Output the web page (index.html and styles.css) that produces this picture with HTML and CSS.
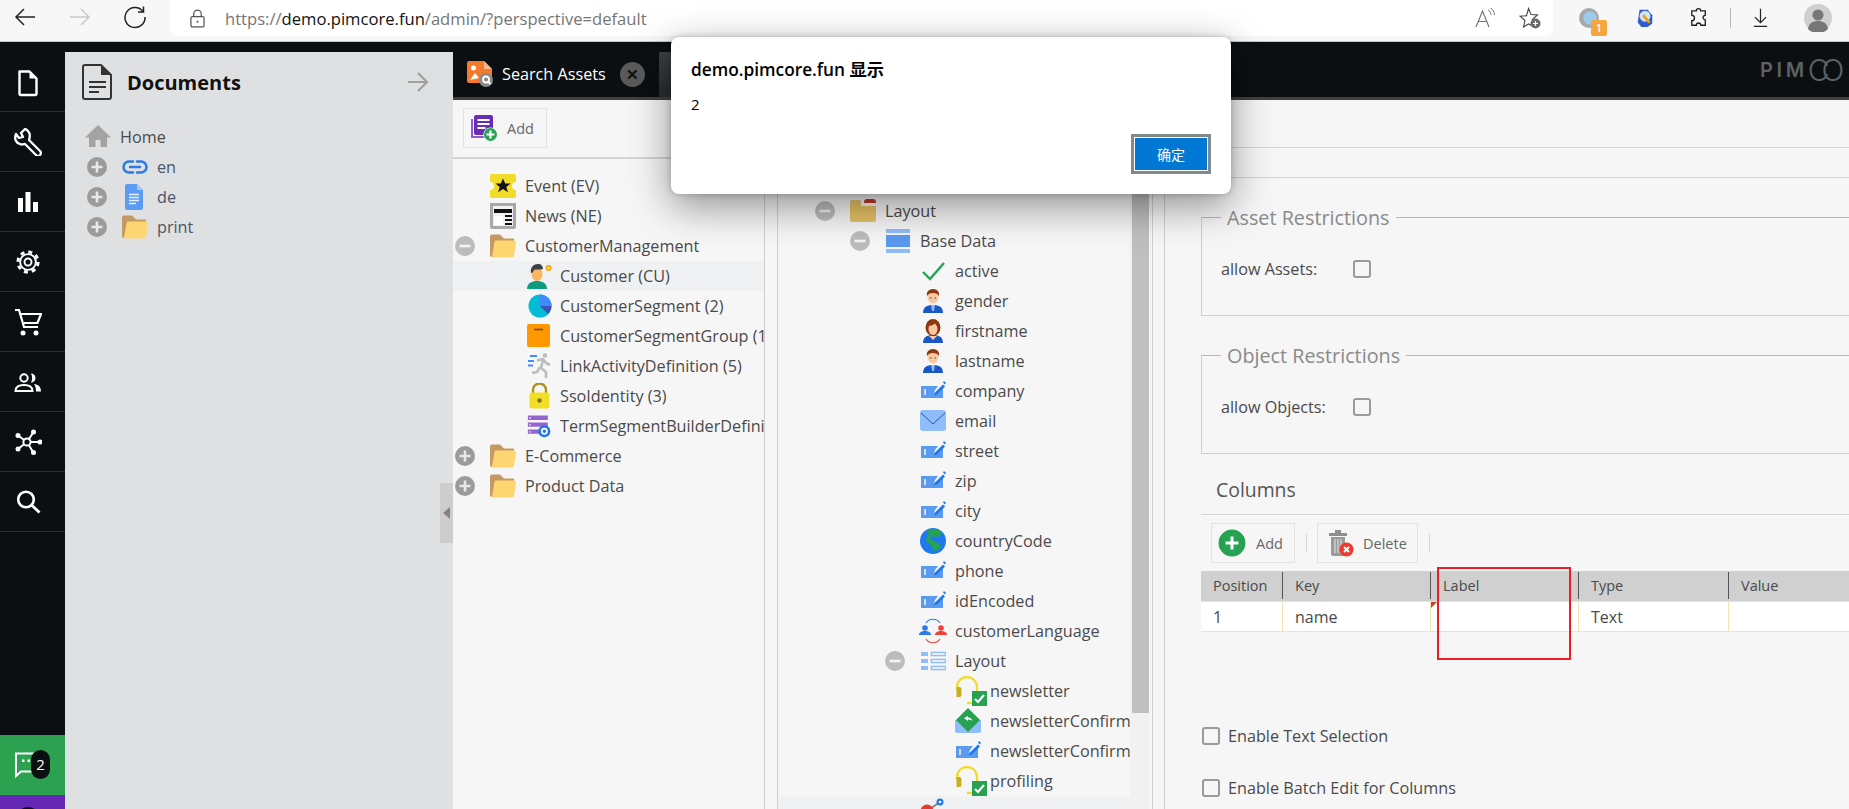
FILE: index.html
```html
<!DOCTYPE html>
<html lang="en">
<head>
<meta charset="utf-8">
<title>Pimcore</title>
<link rel="stylesheet" href="styles.css">
</head>
<body>
<svg class="sprite" xmlns="http://www.w3.org/2000/svg">
  <symbol id="plus" viewBox="0 0 20 20"><circle cx="10" cy="10" r="10" fill="#9b9b9b"/><path d="M10 4.5v11M4.5 10h11" stroke="#e8e8e8" stroke-width="2.6"/></symbol>
  <symbol id="minus" viewBox="0 0 20 20"><circle cx="10" cy="10" r="10" fill="#bcbcbc"/><path d="M4.5 10h11" stroke="#f4f4f4" stroke-width="2.6"/></symbol>
  <symbol id="folder" viewBox="0 0 26 26"><path d="M0 3.5a2 2 0 0 1 2-2h8l4 4h10v3H5L3 24H2a2 2 0 0 1-2-2z" fill="#c39a62"/><path d="M5 7.500h19a2 2 0 0 1 2 2l-2 13a2 2 0 0 1-2 2H3a1.500 1.500 0 0 1-1-1.500z" fill="#fdd672"/></symbol>
  <symbol id="home" viewBox="0 0 26 26"><path d="M13 1 0 13.500h4V23h6.500v-7h5v7H22v-9.500h4z" fill="#a3a3a3"/></symbol>
  <symbol id="link" viewBox="0 0 26 26"><path d="M11 7.500H7a5.500 5.500 0 0 0 0 11h4M15 7.500h4a5.500 5.500 0 0 1 0 11h-4M8 13h10" fill="none" stroke="#2a79e4" stroke-width="2.500" stroke-linecap="round"/></symbol>
  <symbol id="gdoc" viewBox="0 0 26 26"><path d="M5 0h10l6 6v18a2 2 0 0 1-2 2H5a2 2 0 0 1-2-2V2a2 2 0 0 1 2-2z" fill="#5c9bf2"/><path d="M15 0l6 6h-6z" fill="#a6c8f8"/><path d="M7 10.500h10M7 13.500h10M7 16.500h10M7 19.500h7" stroke="#e8f0fd" stroke-width="1.300"/></symbol>
  <symbol id="event" viewBox="0 0 26 26"><path d="M2 1h22a2 2 0 0 1 2 2v6a4 4 0 0 0 0 8v6a2 2 0 0 1-2 2H2a2 2 0 0 1-2-2v-6a4 4 0 0 0 0-8V3a2 2 0 0 1 2-2z" fill="#f2dc2a"/><path d="M13 5.500l2.200 5h5.300l-4.200 3.400 1.600 5.300-4.900-3.100-4.900 3.100 1.600-5.300-4.200-3.400h5.300z" fill="#111"/></symbol>
  <symbol id="news" viewBox="0 0 26 26"><path d="M0 0h26v24a2 2 0 0 1-2 2H2a2 2 0 0 1-2-2z" fill="#a9a9a9"/><path d="M3 3h20v20H3z" fill="#f2f2f2"/><path d="M4 6h18v4H4zM15 12h7v2h-7zM15 16h7v2h-7zM15 20h7v2h-7z" fill="#111"/><path d="M4 13h9v9H4z" fill="#fff"/></symbol>
  <symbol id="customer" viewBox="0 0 26 26"><path d="M0 26c0-6 5-8 10-8s10 2 10 8z" fill="#0f9b7e"/><ellipse cx="10" cy="11" rx="5.500" ry="7" fill="#f9b65e"/><path d="M4 10C3 4 7 1 11 1c3 0 5 2 5 5-3 1-8 0-9 1-1 2-1 3-3 3z" fill="#3b4148"/><circle cx="21.500" cy="5" r="3" fill="#ffa000"/><circle cx="21.500" cy="5" r="1.500" fill="#ffe082"/></symbol>
  <symbol id="segment" viewBox="0 0 26 26"><circle cx="13" cy="13" r="11.500" fill="#00bcd4"/><path d="M13 13V1.500A11.500 11.500 0 0 1 24.500 13z" fill="#448aff"/><path d="M13 13h11.500a11.500 11.500 0 0 1-3.400 8.100z" fill="#3f51b5"/></symbol>
  <symbol id="box" viewBox="0 0 26 26"><rect y="1" width="23" height="23" rx="2" fill="#ff9800"/><path d="M7 6.500h9" stroke="#7a4a00" stroke-width="1.600"/></symbol>
  <symbol id="run" viewBox="0 0 26 26"><circle cx="18" cy="2.500" r="2.300" fill="#bdbdbd"/><path d="M10 7.500l6-1.500 3 4 4 2M16 7l-2 8 5 4v6M13 14l-3 5-5 1" fill="none" stroke="#bdbdbd" stroke-width="2.600" stroke-linejoin="round"/><path d="M3 3h7M1 8h6M1 12.500h5" stroke="#448aff" stroke-width="2"/></symbol>
  <symbol id="lock" viewBox="0 0 26 26"><path d="M6 11V7a6.500 6.500 0 0 1 13 0v4" fill="none" stroke="#ac9318" stroke-width="2.400"/><rect x="2.500" y="9.500" width="20" height="16" rx="2.500" fill="#f0de27"/><circle cx="12.500" cy="17.500" r="2.200" fill="#7d6d10"/></symbol>
  <symbol id="term" viewBox="0 0 30 26"><path d="M1 1h23v5H1zM1 9h23v5H1zM1 17h23v5H1z" fill="#9565cf"/><path d="M2.500 3h2v1.500h-2zM2.500 11h2v1.500h-2zM2.500 19h2v1.500h-2z" fill="#e8dcf7"/><circle cx="20" cy="19" r="7" fill="#1e78ee"/><circle cx="20" cy="19" r="3" fill="none" stroke="#fff" stroke-width="2"/></symbol>
  <symbol id="dfolder" viewBox="0 0 26 26"><path d="M2 2h7a2 2 0 0 1 2 2v4h15v14a2 2 0 0 1-2 2H2a2 2 0 0 1-2-2V4a2 2 0 0 1 2-2z" fill="#e8c366"/><path d="M14 5V4a3 3 0 0 1 3-3h6a3 3 0 0 1 3 3v1z" fill="#c0392b"/></symbol>
  <symbol id="panel" viewBox="0 0 26 26"><path d="M1 1h24v4H1zM1 21h24v4H1z" fill="#90bcf8"/><path d="M1 7h24v12H1z" fill="#5a9af0"/></symbol>
  <symbol id="check" viewBox="0 0 26 26"><path d="M3 14l7 7L24 5" fill="none" stroke="#27a152" stroke-width="2.400"/></symbol>
  <symbol id="man" viewBox="0 0 26 26"><path d="M3 25c0-6 4-8 10-8s10 2 10 8z" fill="#1a57c4"/><path d="M11 17h4l-1 6h-2z" fill="#8db8f0"/><ellipse cx="13" cy="9" rx="5.500" ry="6.500" fill="#f8c9a0"/><path d="M7 8c-1-4 2-7 6-7s7 3 6 7c-1-2-3-3-6-3s-5 1-6 3z" fill="#8c3812"/><path d="M10 10h1.500M14.500 10H16" stroke="#444" stroke-width="1"/></symbol>
  <symbol id="woman" viewBox="0 0 26 26"><path d="M3 25c0-6 4-8 10-8s10 2 10 8z" fill="#1a57c4"/><ellipse cx="13" cy="9.500" rx="7.500" ry="8.500" fill="#8c3812"/><ellipse cx="13" cy="11" rx="4.500" ry="6" fill="#f8c9a0"/><path d="M9 8c2 0 5-1 6-3 1 2 2 3 2.500 3L17 4l-5-1z" fill="#8c3812"/><path d="M9 18l4 4 4-4z" fill="#f8c9a0"/></symbol>
  <symbol id="input" viewBox="0 0 26 26"><path d="M1 8h17l-3 4-1 3 3-1 6-5v11H1z" fill="#5a9af0"/><path d="M4 11h2v6H4z" fill="#cfe1fb"/><path d="M15 14.500 23 6.500l2 2-8 8-3 1z" fill="#1e78ee"/><path d="M24 3l2 2-1 1.500L23 4.500z" fill="#1e78ee"/></symbol>
  <symbol id="mail" viewBox="0 0 26 26"><rect y="2" width="26" height="21" rx="3" fill="#8fbdf9"/><path d="M1 5l12 11L25 5" fill="none" stroke="#1a57c4" stroke-width="1"/></symbol>
  <symbol id="globe" viewBox="0 0 26 26"><circle cx="13" cy="13" r="13" fill="#1e78ee"/><path d="M6 3c3-2 9-3 13-1 2 1 3 3 3 4l-5 3-5-1-2 3 6 3 4 2 1 2-3 4c-2 1-4 1-5 0l-1-4-4-3-2-3 1-3 2-3z" fill="#27a152"/></symbol>
  <symbol id="lang" viewBox="0 0 30 26"><path d="M8 5C11 0 19 0 22 5" fill="none" stroke="#2a79e4" stroke-width="1.200"/><path d="M8 21c3 5 11 5 14 0" fill="none" stroke="#ef4136" stroke-width="1.200"/><circle cx="7" cy="10" r="2.800" fill="#2a79e4"/><path d="M1 17c0-3 3-4 6-4s6 1 6 4z" fill="#2a79e4"/><circle cx="23" cy="10" r="2.800" fill="#ef4136"/><path d="M17 17c0-3 3-4 6-4s6 1 6 4z" fill="#ef4136"/></symbol>
  <symbol id="lay" viewBox="0 0 26 26"><path d="M1 4h7v4H1zM1 11h7v4H1zM1 18h7v4H1z" fill="#90bcf8"/><path d="M11.500 4.500h14v3h-14zM11.500 11.500h14v3h-14zM11.500 18.500h14v3h-14z" fill="#fff" stroke="#90bcf8" stroke-width="1.500"/></symbol>
  <symbol id="head" viewBox="0 0 32 30"><path d="M2 14V11C2 5 7 1 12 1s10 4 10 10v6" fill="none" stroke="#f0dc2a" stroke-width="2.300"/><path d="M1.500 11h3a2 2 0 0 1 2 2v6a2 2 0 0 1-2 2h-3z" fill="#c9b01f"/><path d="M12 27h8" stroke="#f0dc2a" stroke-width="2.400"/><rect x="17" y="15" width="15" height="15" fill="#27a152"/><path d="M20 23l3 3 6-7" fill="none" stroke="#fff" stroke-width="2.200"/></symbol>
  <symbol id="confirm" viewBox="0 0 26 26"><path d="M0 12h26v11a2 2 0 0 1-2 2H2a2 2 0 0 1-2-2z" fill="#8fbdf9"/><path d="M13 0l12 12-12 12L1 12z" fill="#27a152"/><path d="M9 10l4-2v1.500c3 0 4 2 4.500 3.500-1-1-2.500-1.500-4.500-1.500V13z" fill="#fff"/></symbol>
  <symbol id="rel" viewBox="0 0 26 26"><path d="M7 13 20 4" stroke="#888" stroke-width="2"/><circle cx="20" cy="4" r="3.500" fill="#1e78ee"/><circle cx="20" cy="4" r="1.300" fill="#fff"/><circle cx="7" cy="13" r="6.500" fill="#e53935"/></symbol>
  <symbol id="addgreen" viewBox="0 0 26 26"><circle cx="13" cy="13" r="12.500" fill="#27a152"/><path d="M13 7v12M7 13h12" stroke="#fff" stroke-width="2.800"/></symbol>
  <symbol id="trash" viewBox="0 0 26 28"><path d="M1 4h18v3H1zM7 1h6v3H7z" fill="#8f8f8f"/><path d="M3 8h14v17a2 2 0 0 1-2 2H5a2 2 0 0 1-2-2z" fill="#9a9a9a"/><path d="M7 10v14M10 10v14M13 10v14" stroke="#ddd" stroke-width="1.200"/><circle cx="18.500" cy="20.500" r="7" fill="#ef3b2d"/><path d="M16 18l5 5M21 18l-5 5" stroke="#fff" stroke-width="2"/></symbol>
  <symbol id="addpurple" viewBox="0 0 28 28"><path d="M1 5h2v17h15v2H1z" fill="#8e5ccc"/><rect x="4" y="1" width="19" height="20" rx="2" fill="#6a2cb6"/><path d="M7.500 6h12M7.500 10h12M7.500 14h8" stroke="#fff" stroke-width="2"/><circle cx="20.500" cy="20.500" r="7" fill="#fff"/><circle cx="20.500" cy="20.500" r="6.500" fill="#27a152"/><path d="M20.500 16.500v8M16.500 20.500h8" stroke="#fff" stroke-width="2.200"/></symbol>
  <symbol id="searchasset" viewBox="0 0 26 26"><path d="M2 0h15l8 8v12a2 2 0 0 1-2 2H2a2 2 0 0 1-2-2V2a2 2 0 0 1 2-2z" fill="#f47b2e"/><path d="M17 0l8 8h-8z" fill="#f9b88a"/><circle cx="6.500" cy="7" r="2.500" fill="#fff"/><path d="M3 19l5-7 4 5z" fill="#fff"/><circle cx="19" cy="19" r="7" fill="#8a8a8a"/><circle cx="19" cy="18.500" r="3" fill="none" stroke="#fff" stroke-width="1.800"/><path d="M21 20.500l2.500 2.500" stroke="#fff" stroke-width="1.800"/></symbol>
  <symbol id="s-doc" viewBox="0 0 28 28"><path d="M5.500 2.500h10l7 7v15a1.500 1.500 0 0 1-1.500 1.500H7a1.500 1.500 0 0 1-1.500-1.500z" fill="none" stroke="#fff" stroke-width="2.400" stroke-linejoin="round"/><path d="M15.500 2.500v7h7z" fill="#fff"/></symbol>
  <symbol id="s-wrench" viewBox="0 0 28 28"><path d="M11 1 7 5l2 4-4 1-3-4C0 11 2 15 6 16c2 1 4 0 5 0l11 11a2.800 2.800 0 0 0 4-4L15 12c1-3 1-7-1-9-1-1-2-2-3-2z" fill="none" stroke="#fff" stroke-width="2.300" stroke-linejoin="round"/></symbol>
  <symbol id="s-bars" viewBox="0 0 28 28"><path d="M4 10h5v14H4zM11.500 4h5v20h-5zM19 14h5v10h-5z" fill="#fff"/></symbol>
  <symbol id="s-gear" viewBox="-2 -2 32 32"><g fill="none" stroke="#fff"><circle cx="14" cy="14" r="11.500" stroke-width="3.500" stroke-dasharray="4.500 4.530"/><circle cx="14" cy="14" r="9" stroke-width="2.200"/><circle cx="14" cy="14" r="4" stroke-width="2.200"/></g></symbol>
  <symbol id="s-cart" viewBox="0 0 28 28"><g fill="none" stroke="#fff" stroke-width="2.200"><path d="M1 2h4l5 17h14"/><path d="M6.500 6H27l-3.500 9H10"/></g><circle cx="9" cy="25" r="2.500" fill="#fff"/><circle cx="22" cy="25" r="2.500" fill="#fff"/></symbol>
  <symbol id="s-users" viewBox="0 0 28 28"><circle cx="10" cy="10" r="3.700" fill="none" stroke="#fff" stroke-width="2"/><path d="M1.500 23c0-4.500 4-6 8.500-6s8.500 1.500 8.500 6z" fill="none" stroke="#fff" stroke-width="2"/><path d="M17 5.500a4.500 4.500 0 0 1 0 9c1.500-3 1.500-6 0-9zM20 16c4 .5 7 2.500 7 7.500h-5c0-3-.5-5.500-2-7.500z" fill="#fff"/></symbol>
  <symbol id="s-hub" viewBox="0 0 28 28"><g stroke="#fff" stroke-width="2" fill="none"><path d="M13 14 19.500 4M13 14 4 7.500M13 14l13 0M13 14 4 21M13 14l6 10"/></g><circle cx="13" cy="14" r="3.600" fill="#0b0f12" stroke="#fff" stroke-width="2"/><g fill="#fff"><circle cx="19.500" cy="4" r="2.500"/><circle cx="4" cy="7.500" r="2.500"/><circle cx="26" cy="14" r="2.500"/><circle cx="4" cy="21" r="2.500"/><circle cx="19.500" cy="24.500" r="2.500"/></g></symbol>
  <symbol id="s-search" viewBox="0 0 28 28"><circle cx="12" cy="11.500" r="7.800" fill="none" stroke="#fff" stroke-width="2.600"/><path d="M17.500 17l8 7.500" stroke="#fff" stroke-width="2.800"/></symbol>
  <symbol id="s-chat" viewBox="0 0 28 28"><path d="M3 2.500h22v18H8l-5 4.500z" fill="none" stroke="#fff" stroke-width="2"/><path d="M9 8.500h2.500V11H9zM14.500 8.500H17V11h-2.500z" fill="#fff"/></symbol>
</svg>

<header class="browser">
  <svg class="nav" viewBox="0 0 24 24"><path d="M22 12H3M11 4l-8 8 8 8" fill="none" stroke="#222" stroke-width="1.500"/></svg>
  <svg class="nav nav-next" viewBox="0 0 24 24"><path d="M2 12h19M13 4l8 8-8 8" fill="none" stroke="#c9c9c9" stroke-width="1.500"/></svg>
  <svg class="nav nav-next" viewBox="0 0 24 24"><path d="M20 6.500A10 10 0 1 0 22 12M20.500 1.500v5.500h-5.500" fill="none" stroke="#222" stroke-width="1.500"/></svg>
  <div class="address">
    <svg class="lockicon" viewBox="0 0 16 20"><path d="M4 8V5a4 4 0 0 1 8 0v3" fill="none" stroke="#555" stroke-width="1.300"/><rect x="1" y="8" width="14" height="11" rx="1.500" fill="none" stroke="#555" stroke-width="1.300"/><circle cx="8" cy="13.500" r="1.100" fill="#555"/></svg>
    <div class="url">https://<b>demo.pimcore.fun</b>/admin/?perspective=default</div>
    <div class="addr-actions">
      <svg class="readaloud" viewBox="0 0 20 20"><path d="M1 19 7.500 3 14 19M3.500 13.500h8" fill="none" stroke="#777" stroke-width="1.200"/><path d="M13 2c2 1 3 3 3 5M15.500 0c2.500 1.500 4 4 4 7" fill="none" stroke="#777" stroke-width="1"/></svg>
      <svg class="star" viewBox="0 0 22 22"><path d="M9.500 1.500l2.500 6 6.500.5-5 4.300 1 3.700-1 3-4-2-5 3 1.500-6.500-5-4.300 6.500-.5z" fill="none" stroke="#444" stroke-width="1.100"/><circle cx="16.500" cy="16.500" r="5" fill="#6a6a6a"/><path d="M16.500 14v5M14 16.500h5" stroke="#fff" stroke-width="1.200"/></svg>
    </div>
  </div>
  <div class="exts">
    <span class="ext-one"><span class="ext-badge">1</span></span>
    <svg class="ext-two" viewBox="0 0 18 22"><path d="M3 2h9l5 6v9l-5 4H5l-4-5z" fill="#2e5bd0"/><circle cx="9" cy="9" r="6" fill="#cfe3fb"/><path d="M7 8l7 8" stroke="#e8a317" stroke-width="3"/></svg>
    <svg class="ext-puz" viewBox="0 0 20 22"><path d="M7 3a2.500 2.500 0 0 1 5 0h5v5a2.500 2.500 0 0 0 0 5v6h-5a2.500 2.500 0 0 0-5 0H2v-5a2.500 2.500 0 0 0 0-6V3z" fill="none" stroke="#222" stroke-width="1.500"/></svg>
    <span class="ext-sep"></span>
    <svg class="ext-dl" viewBox="0 0 16 20"><path d="M8 0v15M2 9l6 6 6-6M1 19h14" fill="none" stroke="#222" stroke-width="1.300"/></svg>
    <svg class="ext-av" viewBox="0 0 28 28"><circle cx="14" cy="14" r="14" fill="#cfcfcd"/><circle cx="14" cy="11" r="5.500" fill="#777"/><path d="M4 25c1-6 5-8 10-8s9 2 10 8a14 14 0 0 1-20 0z" fill="#777"/></svg>
  </div>
</header>

<div class="app">
  <nav class="rail">
    <div class="rail-item rail-first"><svg class="rail-ic"><use href="#s-doc"/></svg></div>
    <div class="rail-item"><svg class="rail-ic"><use href="#s-wrench"/></svg></div>
    <div class="rail-item"><svg class="rail-ic"><use href="#s-bars"/></svg></div>
    <div class="rail-item"><svg class="rail-ic"><use href="#s-gear"/></svg></div>
    <div class="rail-item"><svg class="rail-ic"><use href="#s-cart"/></svg></div>
    <div class="rail-item"><svg class="rail-ic"><use href="#s-users"/></svg></div>
    <div class="rail-item"><svg class="rail-ic"><use href="#s-hub"/></svg></div>
    <div class="rail-item"><svg class="rail-ic"><use href="#s-search"/></svg></div>
    <div class="rail-fill"></div>
    <div class="rail-chat"><svg class="rail-ic chat-ic"><use href="#s-chat"/></svg><span class="chat-badge">2</span></div>
    <div class="rail-purple"><span class="purple-dot"></span></div>
  </nav>

  <div class="work">
    <aside class="docs">
      <div class="docs-head">
        <svg class="docs-ic" viewBox="0 0 30 36"><path d="M3 1h16l10 10v22a2 2 0 0 1-2 2H3a2 2 0 0 1-2-2V3a2 2 0 0 1 2-2z" fill="none" stroke="#333" stroke-width="2"/><path d="M19 1v10h10z" fill="#333"/><path d="M7 18h17M7 23h17M7 28h10" stroke="#333" stroke-width="2"/></svg>
        <h1 class="docs-title">Documents</h1>
        <svg class="docs-arrow" viewBox="0 0 22 22"><path d="M1 11h19M11 2l9 9-9 9" fill="none" stroke="#a0a0a0" stroke-width="2.200"/></svg>
      </div>
      <div class="docs-tree">
        <div class="row row-home"><svg class="ic"><use href="#home"/></svg><span>Home</span></div>
        <div class="row"><svg class="tg"><use href="#plus"/></svg><svg class="ic"><use href="#link"/></svg><span class="blue">en</span></div>
        <div class="row"><svg class="tg"><use href="#plus"/></svg><svg class="ic"><use href="#gdoc"/></svg><span class="blue">de</span></div>
        <div class="row"><svg class="tg"><use href="#plus"/></svg><svg class="ic"><use href="#folder"/></svg><span class="blue">print</span></div>
      </div>
      <div class="collapse"><span class="collapse-arrow"></span></div>
    </aside>

    <div class="content">
      <div class="tabs">
        <div class="tab">
          <svg class="tab-ic"><use href="#searchasset"/></svg>
          <span class="tab-t">Search Assets</span>
          <span class="tab-x">✕</span>
        </div>
        <div class="tab-next"></div>
        <div class="logo"><span class="logo-pim">PIM</span><span class="logo-co">CO</span></div>
      </div>

      <div class="panes">
        <section class="classes">
          <div class="tb"><div class="btn btn-main"><svg class="btn-ic"><use href="#addpurple"/></svg><span>Add</span></div></div>
          <div class="tree tree-left">
            <div class="row"><span class="tg"></span><svg class="ic"><use href="#event"/></svg><span>Event (EV)</span></div>
            <div class="row"><span class="tg"></span><svg class="ic"><use href="#news"/></svg><span>News (NE)</span></div>
            <div class="row"><svg class="tg"><use href="#minus"/></svg><svg class="ic"><use href="#folder"/></svg><span>CustomerManagement</span></div>
            <div class="row row-sel lv1"><span class="tg"></span><svg class="ic ic-in"><use href="#customer"/></svg><span>Customer (CU)</span></div>
            <div class="row lv1"><span class="tg"></span><svg class="ic ic-in"><use href="#segment"/></svg><span>CustomerSegment (2)</span></div>
            <div class="row lv1"><span class="tg"></span><svg class="ic ic-in"><use href="#box"/></svg><span>CustomerSegmentGroup (1)</span></div>
            <div class="row lv1"><span class="tg"></span><svg class="ic ic-in"><use href="#run"/></svg><span>LinkActivityDefinition (5)</span></div>
            <div class="row lv1"><span class="tg"></span><svg class="ic ic-in"><use href="#lock"/></svg><span>SsoIdentity (3)</span></div>
            <div class="row lv1"><span class="tg"></span><svg class="ic ic-in"><use href="#term"/></svg><span>TermSegmentBuilderDefinition</span></div>
            <div class="row"><svg class="tg"><use href="#plus"/></svg><svg class="ic"><use href="#folder"/></svg><span>E-Commerce</span></div>
            <div class="row"><svg class="tg"><use href="#plus"/></svg><svg class="ic"><use href="#folder"/></svg><span>Product Data</span></div>
          </div>
        </section>

        <section class="fields">
          <div class="tree tree-mid">
            <div class="row"><svg class="tg"><use href="#minus"/></svg><svg class="ic"><use href="#dfolder"/></svg><span>Layout</span></div>
            <div class="row lv1"><svg class="tg"><use href="#minus"/></svg><svg class="ic"><use href="#panel"/></svg><span>Base Data</span></div>
            <div class="row lv2"><span class="tg"></span><svg class="ic"><use href="#check"/></svg><span>active</span></div>
            <div class="row lv2"><span class="tg"></span><svg class="ic"><use href="#man"/></svg><span>gender</span></div>
            <div class="row lv2"><span class="tg"></span><svg class="ic"><use href="#woman"/></svg><span>firstname</span></div>
            <div class="row lv2"><span class="tg"></span><svg class="ic"><use href="#man"/></svg><span>lastname</span></div>
            <div class="row lv2"><span class="tg"></span><svg class="ic"><use href="#input"/></svg><span>company</span></div>
            <div class="row lv2"><span class="tg"></span><svg class="ic"><use href="#mail"/></svg><span>email</span></div>
            <div class="row lv2"><span class="tg"></span><svg class="ic"><use href="#input"/></svg><span>street</span></div>
            <div class="row lv2"><span class="tg"></span><svg class="ic"><use href="#input"/></svg><span>zip</span></div>
            <div class="row lv2"><span class="tg"></span><svg class="ic"><use href="#input"/></svg><span>city</span></div>
            <div class="row lv2"><span class="tg"></span><svg class="ic"><use href="#globe"/></svg><span>countryCode</span></div>
            <div class="row lv2"><span class="tg"></span><svg class="ic"><use href="#input"/></svg><span>phone</span></div>
            <div class="row lv2"><span class="tg"></span><svg class="ic"><use href="#input"/></svg><span>idEncoded</span></div>
            <div class="row lv2"><span class="tg"></span><svg class="ic ic-lang"><use href="#lang"/></svg><span>customerLanguage</span></div>
            <div class="row lv2"><svg class="tg"><use href="#minus"/></svg><svg class="ic"><use href="#lay"/></svg><span>Layout</span></div>
            <div class="row lv3"><span class="tg"></span><svg class="ic ic-wide"><use href="#head"/></svg><span>newsletter</span></div>
            <div class="row lv3"><span class="tg"></span><svg class="ic"><use href="#confirm"/></svg><span>newsletterConfirmed</span></div>
            <div class="row lv3"><span class="tg"></span><svg class="ic"><use href="#input"/></svg><span>newsletterConfirmToken</span></div>
            <div class="row lv3"><span class="tg"></span><svg class="ic ic-wide"><use href="#head"/></svg><span>profiling</span></div>
            <div class="row row-sel lv2"><span class="tg"></span><svg class="ic"><use href="#rel"/></svg></div>
          </div>
          <div class="scroll"><div class="thumb"></div></div>
        </section>

        <section class="settings">
          <div class="s-line s-line-a"></div>
          <div class="s-line s-line-b"></div>
          <div class="s-body">
            <fieldset class="fs">
              <legend>Asset Restrictions</legend>
              <div class="fs-row"><span class="fs-label">allow Assets:</span><span class="cb"></span></div>
            </fieldset>
            <fieldset class="fs fs-obj">
              <legend>Object Restrictions</legend>
              <div class="fs-row"><span class="fs-label">allow Objects:</span><span class="cb"></span></div>
            </fieldset>
            <div class="columns-title">Columns</div>
            <div class="col-tb">
              <div class="btn btn-add"><svg class="btn-ic"><use href="#addgreen"/></svg><span>Add</span></div>
              <span class="tb-sep"></span>
              <div class="btn btn-del"><svg class="btn-ic"><use href="#trash"/></svg><span>Delete</span></div>
              <span class="tb-sep"></span>
            </div>
            <div class="grid">
              <div class="gh"><span>Position</span></div>
              <div class="gh"><span>Key</span></div>
              <div class="gh"><span>Label</span></div>
              <div class="gh"><span>Type</span></div>
              <div class="gh gh-last"><span>Value</span></div>
              <div class="gc">1</div>
              <div class="gc">name</div>
              <div class="gc gc-dirty"></div>
              <div class="gc">Text</div>
              <div class="gc gc-last"></div>
              <div class="mark"></div>
            </div>
            <label class="opt opt-first"><span class="cb"></span><span>Enable Text Selection</span></label>
            <label class="opt"><span class="cb"></span><span>Enable Batch Edit for Columns</span></label>
          </div>
        </section>
      </div>
    </div>
  </div>
</div>

<div class="dialog" role="alertdialog">
  <div class="dlg-title">demo.pimcore.fun 显示</div>
  <div class="dlg-msg">2</div>
  <div class="dlg-foot"><button class="dlg-ok">确定</button></div>
</div>
</body>
</html>
```

FILE: styles.css
```css
* { box-sizing: border-box; }
html, body { margin: 0; height: 809px; overflow: hidden; }
body {
  font-family: "Open Sans", "Noto Sans CJK SC", sans-serif;
  font-size: 16.2px;
  color: #4a4a4a;
  background: #f6f6f6;
}
.sprite { display: none; }

/* browser chrome */
.browser {
  height: 42px;
  display: flex;
  background: #f7f7f7;
  border-bottom: 1px solid #c8c8c8;
  padding-left: 13px;
}
.nav { width: 24px; height: 24px; margin-top: 5px; flex: none; }
.nav-next { margin-left: 31px; }
.address {
  margin-left: 23px;
  width: 1383px;
  height: 36px;
  background: #fff;
  border-radius: 0 0 7px 7px;
  display: flex;
  align-items: center;
  padding-left: 20px;
  flex: none;
}
.lockicon { width: 15px; height: 19px; flex: none; }
.url {
  margin-left: 20px;
  color: #767676;
  font-size: 16.6px;
  white-space: nowrap;
}
.url b { font-weight: 400; color: #111; }
.addr-actions { margin-left: auto; display: flex; align-items: center; padding-right: 12px; }
.readaloud { width: 20px; height: 20px; }
.star { width: 22px; height: 22px; margin-left: 24px; }
.exts { display: flex; align-items: center; height: 36px; padding-left: 26px; }
.ext-one {
  width: 20px; height: 20px; border-radius: 50%;
  background: radial-gradient(circle at 55% 50%, #9ccbee 0 6px, #a8a8a8 7px);
  position: relative;
}
.ext-badge {
  position: absolute; left: 12px; top: 12px;
  width: 16px; height: 16px; border-radius: 2px;
  background: #f3a73e; color: #fff;
  font-size: 11px; font-weight: 600; line-height: 16px; text-align: center;
}
.ext-two { width: 18px; height: 20px; margin-left: 37px; }
.ext-puz { width: 18px; height: 22px; margin-left: 36px; }
.ext-sep { width: 1px; height: 20px; background: #bbb; margin-left: 22px; }
.ext-dl { width: 15px; height: 20px; margin-left: 22px; }
.ext-av { width: 28px; height: 28px; margin-left: 36px; }

/* app */
.app { display: flex; height: 767px; background: #0b0f12; }
.rail { width: 65px; flex: none; display: flex; flex-direction: column; }
.rail-item {
  height: 60px;
  flex: none;
  display: flex; align-items: center; justify-content: center;
  padding-right: 9px;
  border-bottom: 1px solid #2e3134;
}
.rail-first { height: 70px; padding-top: 12px; }
.rail-ic { width: 28px; height: 28px; }
.rail-fill { flex: 1; }
.rail-chat {
  height: 60px; flex: none; background: #2ca14f;
  display: flex; align-items: center; padding-left: 13px;
  position: relative;
}
.chat-badge {
  position: absolute; left: 31px; top: 15px;
  width: 19px; height: 29px; border-radius: 10px;
  background: #0b0f12; color: #fff;
  font-size: 15px; line-height: 29px; text-align: center;
}
.rail-purple { height: 14px; flex: none; background: #6428b4; overflow: hidden; display: flex; justify-content: center; padding: 12px 9px 0 0; }
.purple-dot { width: 24px; height: 24px; border-radius: 50%; background: #0b0f12; }

.work { flex: 1; display: flex; min-width: 0; padding-top: 10px; }
.docs {
  width: 388px; flex: none;
  background: #dfe0e2;
  position: relative;
  display: flex; flex-direction: column;
}
.docs-head { height: 60px; display: flex; align-items: center; padding: 0 24px 0 17px; }
.docs-ic { width: 30px; height: 36px; flex: none; }
.docs-title {
  margin: 0 0 0 15px;
  font-size: 20px; font-weight: 700; color: #111;
}
.docs-arrow { width: 22px; height: 22px; margin-left: auto; }
.docs-tree { padding-top: 10px; }

/* rows */
.row {
  height: 30px;
  display: flex; align-items: center;
  white-space: nowrap;
  padding-left: 22px;
}
.tg { width: 20px; height: 20px; margin-right: 15px; flex: none; }
.ic { width: 26px; height: 26px; margin-right: 9px; flex: none; }
.ic-in { margin: 0 7px 0 2px; }
.ic-wide { width: 32px; height: 30px; margin-right: 3px; }
.ic-lang { width: 30px; margin: 0 7px 0 -2px; }
.row-home { padding-left: 20px; }
.blue { color: #4a5568; }
.collapse {
  position: absolute; right: 0; top: 431px;
  width: 13px; height: 60px; background: #cdcdcd;
  display: flex; align-items: center; justify-content: center;
}
.collapse-arrow { width: 0; height: 0; border: 6px solid transparent; border-left: 0; border-right: 7px solid #8a8178; }

.content { flex: 1; min-width: 0; margin-top: -10px; display: flex; flex-direction: column; }
.tabs {
  height: 58px; flex: none;
  background: #0b0f12;
  border-bottom: 3px solid #3e4042;
  display: flex;
  overflow: hidden;
}
.tab { width: 206px; display: flex; align-items: center; padding: 9px 0 0 14px; flex: none; }
.tab-ic { width: 26px; height: 26px; flex: none; }
.tab-t { color: #fff; margin-left: 9px; white-space: nowrap; }
.tab-x {
  width: 25px; height: 25px; border-radius: 50%;
  background: #5a5a5a; color: #0b0f12;
  font-size: 15px; font-weight: 700; line-height: 25px; text-align: center;
  margin-left: 14px; flex: none;
}
.tab-next { width: 300px; margin-top: 10px; background: linear-gradient(#3e4042, #2a2c2e); flex: none; }
.logo { margin-left: auto; display: flex; align-items: center; width: 89px; flex: none; overflow: hidden; color: #5e6163; }
.logo-pim { font-family: "Inter", sans-serif; font-size: 20px; font-weight: 600; letter-spacing: 3.6px; }
.logo-co { font-family: "Inter", sans-serif; font-size: 30px; font-weight: 300; letter-spacing: -8px; }

.panes { flex: 1; min-height: 0; display: flex; background: #f6f6f6; }
.classes { width: 312px; flex: none; border-right: 1px solid #cfcfcf; overflow: hidden; }
.tb {
  height: 59px;
  border-bottom: 2px solid #d4d4d4;
  padding: 8px 0 0 10px;
}
.btn {
  height: 40px;
  display: inline-flex; align-items: center;
  border: 1px solid #e2e2e2;
  color: #666;
  font-size: 14.500px;
}
.btn-main { width: 84px; padding-left: 6px; }
.btn-main .btn-ic { margin-right: 9px; }
.btn-ic { width: 28px; height: 28px; flex: none; }
.tree-left { padding-top: 12px; }
.tree-left .row { padding-left: 2px; }
.tree-left .row.lv1 { padding-left: 37px; }
.row-sel { background: #f0f1f2; }

.fields {
  width: 376px; flex: none;
  margin-left: 12px;
  border-left: 1px solid #cfcfcf;
  border-right: 1px solid #cfcfcf;
  display: flex;
  overflow: hidden;
}
.tree-mid { width: 352px; flex: none; padding-top: 96px; overflow: hidden; }
.tree-mid .row { padding-left: 37px; }
.tree-mid .row.lv1 { padding-left: 72px; }
.tree-mid .row.lv2 { padding-left: 107px; }
.tree-mid .row.lv3 { padding-left: 142px; }
.scroll { width: 19px; flex: none; background: #f1f1f1; }
.thumb { height: 613px; margin-left: 2px; background: #bfbfbf; }

.settings { flex: 1; min-width: 0; margin-left: 11px; border-left: 1px solid #cfcfcf; overflow: hidden; }
.s-line { border-bottom: 1px solid #d4d4d4; }
.s-line-a { height: 48px; }
.s-line-b { height: 30px; }
.s-body { padding-left: 36px; width: 1000px; }
.fs {
  margin: 27px 0 0;
  padding: 0 0 0 19px;
  height: 111px;
  border: 1px solid #cfcfcf;
  border-top-color: #b8b8b8;
  min-inline-size: 0;
}
.fs legend {
  padding: 0 6px;
  font-size: 19.800px; line-height: 25px; color: #8a8a8a;
}
.fs-obj { margin-top: 27px; }
.fs-row { display: flex; align-items: center; height: 18px; margin-top: 30px; }
.fs-label { width: 132px; flex: none; }
.cb {
  width: 18px; height: 18px; flex: none;
  border: 2px solid #9a9a9a; border-radius: 3px;
  background: #f6f6f6;
}
.columns-title {
  margin-top: 23px;
  height: 38px;
  padding-left: 15px;
  font-size: 19.400px;
  line-height: 26px;
  color: #555;
  border-bottom: 1px solid #d4d4d4;
}
.col-tb { display: flex; align-items: center; height: 56px; padding-left: 10px; }
.btn-add { width: 84px; padding-left: 6px; }
.btn-add .btn-ic { margin-right: 10px; }
.btn-del { width: 101px; padding-left: 9px; }
.btn-del .btn-ic { margin-right: 8px; }
.tb-sep { width: 1px; height: 18px; background: #d4d4d4; margin: 0 10.500px; }
.grid {
  display: grid;
  grid-template-columns: 82px 148px 148px 150px 1fr;
  position: relative;
  width: 964px;
}
.gh {
  height: 30px; background: #d0d0d0;
  padding-top: 1px;
  font-size: 14.500px;
}
.gh span {
  display: flex; align-items: center;
  height: 27px; padding-left: 12px;
  border-right: 1px solid #555;
}
.gh-last span { border-right: 0; }
.gc {
  height: 31px; background: #fff;
  padding-left: 12px; line-height: 30px;
  font-size: 16px;
  border-right: 1px solid #f1e4b3;
  border-bottom: 1px solid #f1e4b3;
  border-top: 1px solid #f1e4b3;
  position: relative;
}
.gc-last { border-right: 0; }
.gc-dirty::before {
  content: "";
  position: absolute; left: 0; top: 0;
  border: 3.500px solid transparent;
  border-left-color: #c9402c; border-top-color: #c9402c;
}
.mark {
  position: absolute; left: 236px; top: -4px;
  width: 134px; height: 93px;
  border: 2px solid #ee1c25;
}
.opt { display: flex; align-items: center; gap: 8px; height: 18px; margin-top: 34px; padding-left: 1px; }
.opt-first { margin-top: 95px; }

/* alert */
.dialog {
  position: absolute; left: 671px; top: 37px;
  width: 560px; height: 157px;
  background: #fff;
  border-radius: 8px;
  box-shadow: 0 12px 40px rgba(0,0,0,.42), 0 0 6px rgba(0,0,0,.2);
  padding: 20px 20px 0;
  color: #000;
  font-family: "Open Sans", "Noto Sans CJK SC", sans-serif;
  display: flex; flex-direction: column;
}
.dlg-title { font-size: 17.300px; font-weight: 600; line-height: 26px; }
.dlg-msg { font-size: 15px; line-height: 20px; margin-top: 11px; }
.dlg-foot { margin-top: auto; display: flex; justify-content: flex-end; }
.dlg-ok {
  width: 80px; height: 40px;
  margin-bottom: 20px;
  background: #0078d4;
  border: 2px solid #fff;
  outline: 3px solid #828a90; outline-offset: -3px;
  box-shadow: inset 0 0 0 2px #fff;
  color: #fff;
  font-family: "Noto Sans CJK SC", sans-serif;
  font-size: 14px;
  padding: 0;
}
```
